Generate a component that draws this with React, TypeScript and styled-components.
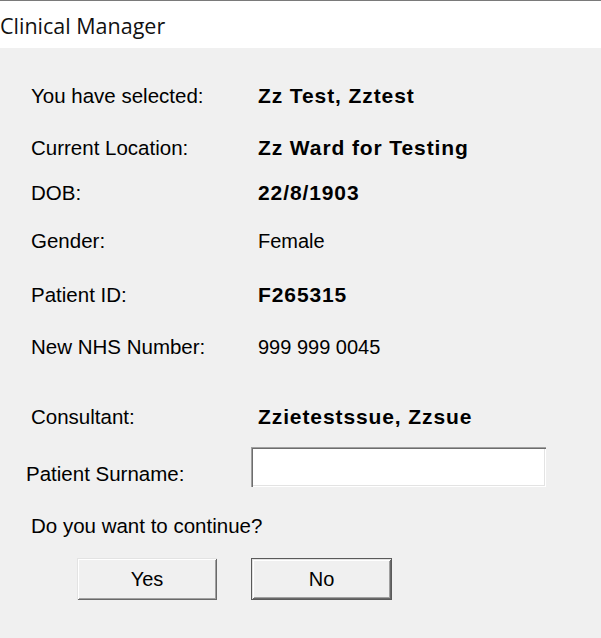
import styled, { createGlobalStyle } from "styled-components";

const GlobalStyle = createGlobalStyle`
    html, body {
        margin: 0;
        padding: 0;
        background: #f0f0f0;
    }
    body {
        font-family: "Liberation Sans", Arial, sans-serif;
        color: #000;
    }
`;

const Window = styled.div`
    width: 601px;
    height: 638px;
    background: #f0f0f0;
    overflow: hidden;
`;

const TitleBar = styled.div`
    height: 44px;
    padding-top: 3px;
    border-top: 1px solid #7a7a7a;
    background: #fff;
    font-family: "Open Sans", "Noto Sans", sans-serif;
    font-size: 21.5px;
    line-height: 44px;
    color: #111;
    white-space: nowrap;
`;

const Body = styled.div`
    display: flex;
    flex-direction: column;
    padding-top: 36px;
`;

const Row = styled.div<{ $gap: number }>`
    display: grid;
    grid-template-columns: 227px 1fr;
    align-items: baseline;
    padding-left: 31px;
    margin-top: ${(p) => p.$gap}px;
    line-height: 24px;
    height: 24px;
`;

const Label = styled.span`
    font-size: 20.5px;
    white-space: nowrap;
`;

const Value = styled.span<{ $bold?: boolean }>`
    font-size: ${(p) => (p.$bold ? 21 : 20)}px;
    font-weight: ${(p) => (p.$bold ? 700 : 400)};
    letter-spacing: ${(p) => (p.$bold ? 0.9 : 0)}px;
    white-space: nowrap;
`;

const SurnameRow = styled.div`
    display: flex;
    align-items: flex-end;
    padding-left: 26px;
    margin-top: 18px;
`;

const SurnameLabel = styled.label`
    width: 225px;
    font-size: 20.5px;
    line-height: 24px;
    padding-bottom: 1px;
`;

const TextBox = styled.input`
    width: 295px;
    height: 40px;
    box-sizing: border-box;
    border: none;
    background: #fff;
    padding: 0 6px;
    font-family: "Liberation Sans", Arial, sans-serif;
    font-size: 20px;
    outline: none;
    box-shadow: inset 1px 1px #a0a0a0, inset 2px 2px #6d6d6d, inset -1px -1px #fff,
        inset -2px -2px #e3e3e3;
`;

const Question = styled.div`
    padding-left: 31px;
    margin-top: 27px;
    font-size: 20.5px;
    line-height: 24px;
`;

const ButtonRow = styled.div`
    display: flex;
    gap: 34px;
    padding-left: 77px;
    margin-top: 20px;
`;

const DlgButton = styled.button<{ $default?: boolean }>`
    width: ${(p) => (p.$default ? 141 : 140)}px;
    height: 42px;
    box-sizing: border-box;
    background: #f0f0f0;
    border: ${(p) => (p.$default ? "1px solid #5a5a5a" : "none")};
    padding: 0;
    font-family: "Liberation Sans", Arial, sans-serif;
    font-size: 20px;
    color: #000;
    box-shadow: inset 1px 1px #e3e3e3, inset -1px -1px #696969, inset 2px 2px #fff,
        inset -2px -2px #a0a0a0;
`;

const details = [
    { label: "You have selected:", value: "Zz Test, Zztest", bold: true, gap: 0 },
    { label: "Current Location:", value: "Zz Ward for Testing", bold: true, gap: 28 },
    { label: "DOB:", value: "22/8/1903", bold: true, gap: 21 },
    { label: "Gender:", value: "Female", bold: false, gap: 24 },
    { label: "Patient ID:", value: "F265315", bold: true, gap: 30 },
    { label: "New NHS Number:", value: "999 999 0045", bold: false, gap: 28 },
    { label: "Consultant:", value: "Zzietestssue, Zzsue", bold: true, gap: 46 },
];

export default function App() {
    return (
        <>
            <GlobalStyle />
            <Window>
                <TitleBar>Clinical Manager</TitleBar>
                <Body>
                    {details.map((d) => (
                        <Row key={d.label} $gap={d.gap}>
                            <Label>{d.label}</Label>
                            <Value $bold={d.bold}>{d.value}</Value>
                        </Row>
                    ))}
                    <SurnameRow>
                        <SurnameLabel>Patient Surname:</SurnameLabel>
                        <TextBox type="text" />
                    </SurnameRow>
                    <Question>Do you want to continue?</Question>
                    <ButtonRow>
                        <DlgButton>Yes</DlgButton>
                        <DlgButton $default>No</DlgButton>
                    </ButtonRow>
                </Body>
            </Window>
        </>
    );
}
